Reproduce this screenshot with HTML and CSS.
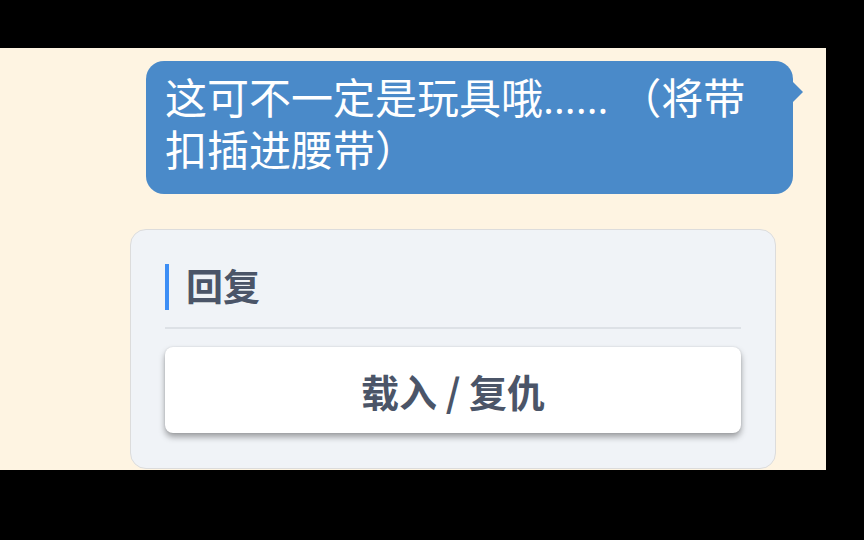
FILE: index.html
```html
<!DOCTYPE html>
<html lang="zh-CN">
<head>
  <meta charset="UTF-8"/>
  <meta name="viewport" content="width=device-width, initial-scale=1.0"/>
  <title>对话</title>
  <link rel="stylesheet" href="styles.css">
</head>
<body>

  <div class="screen">
    <!-- player line -->
    <div class="chat">
      <div class="bubble">这可不一定是玩具哦…… （将带扣插进腰带）</div>
    </div>

    <!-- choices -->
    <div class="card">
      <div class="card-head">
        <h2 class="card-title">回复</h2>
      </div>
      <button class="choice">载入 / 复仇</button>
    </div>
  </div>

</body>
</html>
```

FILE: styles.css
```css
* { box-sizing: border-box; margin: 0; padding: 0; }
html, body { height: 100%; background: #000; overflow: hidden; }
body { font-family: "Noto Sans CJK SC", "Noto Sans", sans-serif; }

.screen {
  margin-top: 48px;
  width: 826px;
  height: 422px;
  background: #fef4e2;
  padding-top: 13px;
  overflow: hidden;
}

.chat {
  display: flex;
  justify-content: flex-end;
  padding-right: 33px;
}

.bubble {
  position: relative;
  width: 647px;
  height: 133px;
  padding: 11px 19px 0;
  background: #4a8ac9;
  color: #fff;
  border-radius: 18px;
  font-family: "Open Sans", "Noto Sans CJK SC", sans-serif;
  font-size: 42px;
  line-height: 52px;
}

.bubble::after {
  content: "";
  position: absolute;
  right: -10px;
  top: 20px;
  border-left: 11px solid #4a8ac9;
  border-top: 11px solid transparent;
  border-bottom: 11px solid transparent;
}

.card {
  margin: 35px 50px 0 130px;
  padding: 34px 34px 35px;
  background: #f0f3f7;
  border: 1px solid #dcdcdc;
  border-radius: 16px;
}

.card-head {
  padding-bottom: 17px;
  border-bottom: 2px solid #dde1e6;
  margin-bottom: 18px;
}

.card-title {
  border-left: 4px solid #3d8ef5;
  padding: 0 0 3px 17px;
  font-size: 37px;
  line-height: 43px;
  font-weight: 700;
  color: #4b5568;
}

.choice {
  display: block;
  width: 100%;
  height: 86px;
  background: #fff;
  border: none;
  border-radius: 8px;
  box-shadow: 0 4px 6px rgba(0, 0, 0, 0.35), 0 0 2px rgba(0, 0, 0, 0.12);
  font-family: inherit;
  font-size: 38px;
  font-weight: 700;
  color: #4b5568;
  cursor: pointer;
}
```
